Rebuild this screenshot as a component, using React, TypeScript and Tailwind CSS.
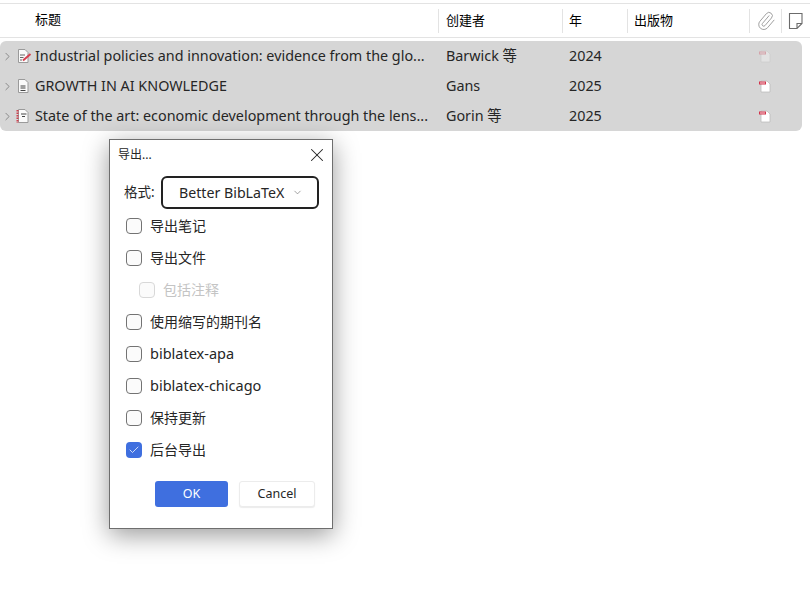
import * as React from "react";
import { ChevronRight, ChevronDown, X, Check, Paperclip } from "lucide-react";

const rows = [
  { title: "Industrial policies and innovation: evidence from the glo...", creator: "Barwick 等", year: "2024", icon: "note", faded: true },
  { title: "GROWTH IN AI KNOWLEDGE", creator: "Gans", year: "2025", icon: "doc", faded: false },
  { title: "State of the art: economic development through the lens...", creator: "Gorin 等", year: "2025", icon: "book", faded: false },
];

const options = [
  { label: "导出笔记" },
  { label: "导出文件" },
  { label: "包括注释", disabled: true },
  { label: "使用缩写的期刊名" },
  { label: "biblatex-apa" },
  { label: "biblatex-chicago" },
  { label: "保持更新" },
  { label: "后台导出", checked: true },
];

function ItemIcon({ kind }: { kind: string }) {
  return (
    <svg width="16" height="16" viewBox="0 0 16 16" className="shrink-0">
      <path d="M2.5 1.5h6.5l3 3v10h-9.5z" fill="#fafafa" stroke="#9a9a9a" strokeWidth="1" />
      {kind === "note" && (
        <>
          <path d="M4 7h5M4 9.5h3.5M4 12h2" stroke="#666" strokeWidth="1" />
          <path d="M7 12.5l7.5-6.5" stroke="#d6404f" strokeWidth="2" />
        </>
      )}
      {kind === "doc" && <path d="M4.5 8h5M4.5 10h5M4.5 12.5h5" stroke="#444" strokeWidth="1" />}
      {kind === "book" && (
        <>
          <path d="M1.5 2v13" stroke="#cf3f4d" strokeWidth="2" strokeDasharray="1.5 1" />
          <path d="M5 6h5.5M6 8.5h3" stroke="#444" strokeWidth="1" />
        </>
      )}
    </svg>
  );
}

function PdfIcon({ faded }: { faded: boolean }) {
  return (
    <svg width="14" height="14" viewBox="0 0 14 14" className={faded ? "opacity-30" : ""}>
      <path d="M3 2h6l3 3v8H3z" fill="#fff" stroke="#bdbdbd" strokeWidth="0.8" />
      <rect x="1" y="2.5" width="7" height="3" fill="#d2334a" />
      <path d="M2 4h5" stroke="#fff" strokeWidth="0.8" />
    </svg>
  );
}

function Box({ checked, disabled }: { checked?: boolean; disabled?: boolean }) {
  if (checked) {
    return (
      <span className="flex h-4 w-4 translate-y-px items-center justify-center rounded-[4px] bg-[#3f6fdf]">
        <Check className="h-3 w-3 text-white" strokeWidth={1.5} />
      </span>
    );
  }
  return (
    <span
      className={
        "block h-4 w-4 translate-y-px rounded-[4px] border bg-[#fbfbfb] " +
        (disabled ? "border-[#d8d8d8]" : "border-[#737373]")
      }
    />
  );
}

export default function App() {
  return (
    <div className="relative h-[603px] w-[810px] overflow-hidden bg-white font-['Noto_Sans','Noto_Sans_CJK_SC',sans-serif] text-[#262626]">
      {/* column headers */}
      <div className="mt-[3px] flex h-[35px] items-center border-y border-[#e3e3e3] text-[13px] text-black">
        <div className="-mt-[2px] w-[438px] pl-[35px]">标题</div>
        <div className="h-6 w-[124px] border-l border-[#e3e3e3] pl-[7px] leading-[22px]">创建者</div>
        <div className="h-6 w-[65px] border-l border-[#e3e3e3] pl-[6px] leading-[22px]">年</div>
        <div className="h-6 w-[122px] border-l border-[#e3e3e3] pl-[6px] leading-[22px]">出版物</div>
        <div className="flex h-6 w-[32px] items-center justify-center border-l border-[#e3e3e3]">
          <Paperclip className="h-[20px] w-[20px] rotate-[-4deg] text-[#9a9a9a]" strokeWidth={1.1} />
        </div>
        <div className="flex h-6 w-[28px] items-center justify-center border-l border-[#e3e3e3]">
          <svg width="16" height="18" viewBox="0 0 16 18">
            <path d="M1.5 1.5h12.5v10l-5 5h-7.5z M14 11.5h-5v5" fill="none" stroke="#6b6b6b" strokeWidth="1.1" />
          </svg>
        </div>
      </div>

      {/* selected rows */}
      <div className="mt-[3px] w-[802px] rounded-md bg-[#d6d6d6] text-[14.35px]">
        {rows.map((r) => (
          <div key={r.title} className="flex h-[30px] items-center">
            <ChevronRight className="ml-[1px] h-[13px] w-[13px] shrink-0 text-[#777]" strokeWidth={1.5} />
            <span className="ml-[1px] flex w-[17px] shrink-0 justify-center">
              <ItemIcon kind={r.icon} />
            </span>
            <span className="ml-[3px] w-[411px] shrink-0 whitespace-nowrap">{r.title}</span>
            <span className="w-[123px] shrink-0">{r.creator}</span>
            <span className="w-[189px] shrink-0">{r.year}</span>
            <PdfIcon faded={r.faded} />
          </div>
        ))}
      </div>

      {/* export dialog */}
      <div className="absolute left-[109px] top-[139px] flex h-[390px] w-[224px] flex-col border border-[#6e6e6e] bg-white shadow-[0_6px_24px_rgba(0,0,0,0.4)]">
        <div className="flex h-[30px] items-center justify-between pl-2 pr-[4px] text-[12px]">
          <span>导出...</span>
          <X className="h-[22px] w-[22px] text-[#222]" strokeWidth={1.1} />
        </div>
        <div className="mt-[6px] flex items-center pl-[14px] text-[13.5px]">
          <span>格式:</span>
          <div className="ml-[6px] flex h-[33px] w-[158px] items-center justify-center rounded-md border-2 border-[#222] pl-[3px] text-[14.2px]">
            Better BibLaTeX
            <ChevronDown className="ml-2 h-[11px] w-[11px] text-[#777]" strokeWidth={1.5} />
          </div>
        </div>
        <div className="flex flex-col">
          {options.map((o) => (
            <div
              key={o.label}
              className={
                "flex h-8 items-center gap-2 text-[14px] " +
                (o.disabled ? "pl-[29px] text-[#c4c4c4]" : "pl-4")
              }
            >
              <Box checked={o.checked} disabled={o.disabled} />
              <span className={o.label.startsWith("biblatex") ? "translate-y-px text-[14.5px]" : ""}>{o.label}</span>
            </div>
          ))}
        </div>
        <div className="mt-[16px] flex justify-end gap-[11px] pr-[17px] text-[12.5px]">
          <button className="h-[26px] w-[73px] rounded-[3px] bg-[#3f6fdf] text-white">OK</button>
          <button className="h-[26px] w-[76px] rounded-[3px] border border-[#ececec] bg-white shadow-[0_1px_1px_rgba(0,0,0,0.08)]">
            Cancel
          </button>
        </div>
      </div>
    </div>
  );
}
